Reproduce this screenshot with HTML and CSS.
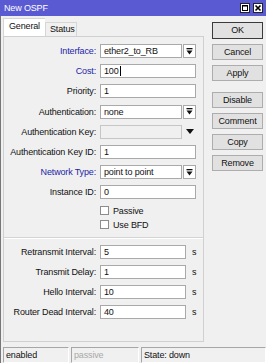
FILE: index.html
```html
<!DOCTYPE html>
<html lang="en">
<head>
    <meta charset="UTF-8">
    <title>New OSPF</title>
    <link rel="stylesheet" href="styles.css">
</head>
<body>
<div class="window">
    <div class="titlebar">
        <span class="title">New OSPF</span>
        <span class="win-btn"><svg width="8" height="8" viewBox="0 0 8 8"><rect x="1.5" y="1.5" width="5" height="5" fill="none" stroke="#000" stroke-width="1"/><rect x="1" y="1" width="6" height="1.5" fill="#000"/></svg></span>
        <span class="win-btn"><svg width="8" height="8" viewBox="0 0 8 8"><path d="M1.5 1.5 L6.5 6.5 M6.5 1.5 L1.5 6.5" stroke="#000" stroke-width="1.6"/></svg></span>
    </div>

    <div class="frame">
        <div class="main">
            <div class="left">
                <div class="tabs">
                    <div class="tab active">General</div>
                    <div class="tab">Status</div>
                </div>
                <div class="panel">
                    <div class="group">
                        <div class="row">
                            <label class="blue">Interface:</label>
                            <div class="combo"><div class="field">ether2_to_RB</div><div class="drop"><svg width="7" height="7" viewBox="0 0 7 7"><rect x="0.5" y="0" width="6" height="1.3" fill="#111"/><polygon points="0.5,2.5 6.5,2.5 3.5,6.5" fill="#111"/></svg></div></div>
                        </div>
                        <div class="row">
                            <label class="blue">Cost:</label>
                            <div class="field">100<span class="caret"></span></div>
                        </div>
                        <div class="row">
                            <label>Priority:</label>
                            <div class="field">1</div>
                        </div>
                        <div class="row">
                            <label>Authentication:</label>
                            <div class="combo"><div class="field">none</div><div class="drop"><svg width="7" height="7" viewBox="0 0 7 7"><rect x="0.5" y="0" width="6" height="1.3" fill="#111"/><polygon points="0.5,2.5 6.5,2.5 3.5,6.5" fill="#111"/></svg></div></div>
                        </div>
                        <div class="row">
                            <label>Authentication Key:</label>
                            <div class="combo"><div class="field disabled"></div><div class="drop plain"><svg width="8" height="5" viewBox="0 0 8 5"><polygon points="0,0 8,0 4,5" fill="#111"/></svg></div></div>
                        </div>
                        <div class="row">
                            <label>Authentication Key ID:</label>
                            <div class="field">1</div>
                        </div>
                        <div class="row">
                            <label class="blue">Network Type:</label>
                            <div class="combo"><div class="field">point to point</div><div class="drop"><svg width="7" height="7" viewBox="0 0 7 7"><rect x="0.5" y="0" width="6" height="1.3" fill="#111"/><polygon points="0.5,2.5 6.5,2.5 3.5,6.5" fill="#111"/></svg></div></div>
                        </div>
                        <div class="row">
                            <label>Instance ID:</label>
                            <div class="field">0</div>
                        </div>
                        <div class="check-row first"><span class="box"></span>Passive</div>
                        <div class="check-row"><span class="box"></span>Use BFD</div>
                    </div>

                    <div class="separator"></div>

                    <div class="group timers">
                        <div class="row">
                            <label>Retransmit Interval:</label>
                            <div class="unit"><div class="field">5</div><span>s</span></div>
                        </div>
                        <div class="row">
                            <label>Transmit Delay:</label>
                            <div class="unit"><div class="field">1</div><span>s</span></div>
                        </div>
                        <div class="row">
                            <label>Hello Interval:</label>
                            <div class="unit"><div class="field">10</div><span>s</span></div>
                        </div>
                        <div class="row">
                            <label>Router Dead Interval:</label>
                            <div class="unit"><div class="field">40</div><span>s</span></div>
                        </div>
                    </div>
                </div>
            </div>

            <div class="buttons">
                <div class="btn default">OK</div>
                <div class="btn">Cancel</div>
                <div class="btn">Apply</div>
                <div class="btn spaced">Disable</div>
                <div class="btn">Comment</div>
                <div class="btn">Copy</div>
                <div class="btn">Remove</div>
            </div>
        </div>

        <div class="statusbar">
            <div class="cell first">enabled</div>
            <div class="cell second muted">passive</div>
            <div class="cell last">State: down</div>
        </div>
    </div>
</div>
</body>
</html>
```

FILE: styles.css
```css
* { box-sizing: border-box; }
body { margin: 0; font-family: "Liberation Sans", Arial, sans-serif; font-size: 9px; letter-spacing: -0.15px; color: #111; background: #f0f0f0; }

.window { width: 266px; height: 363px; display: flex; flex-direction: column; background: #f0f0f0; overflow: hidden; }

/* title bar */
.titlebar { height: 16px; flex: none; background: #5a5ad2; color: #fff; display: flex; align-items: center; padding: 0 3px 0 4px; }
.titlebar .title { flex: 1; }
.win-btn { width: 10px; height: 10px; background: #fff; border: 1px solid #222; margin-left: 3px; display: flex; align-items: center; justify-content: center; }
.win-btn svg { display: block; }

.frame { flex: 1; display: flex; flex-direction: column; border-left: 1px solid #777; }
.main { flex: 1; display: flex; }

/* left side: tabs + panel */
.left { width: 203px; padding: 2px 0 4px 2px; display: flex; flex-direction: column; }
.tabs { height: 18px; display: flex; align-items: flex-end; }
.tab { height: 14px; padding: 0 6px; line-height: 13px; border: 1px solid #d6d6d6; border-bottom: none; background: #f0f0f0; }
.tab.active { height: 18px; width: 42px; line-height: 15px; padding: 0 0 0 5px; background: #fff; border-right: none; }
.tab + .tab { width: 32px; padding: 0 0 0 4px; }

.panel { flex: 1; border: 1px solid #d0d0d0; background: #f0f0f0; padding-top: 7px; }

.row { display: grid; grid-template-columns: 92px 1fr; column-gap: 4px; height: 14px; align-items: center; margin-bottom: 6.2px; padding-right: 7px; }
.row label { text-align: right; white-space: nowrap; }
.row label.blue { color: #2424a6; }

.field { height: 14px; border: 1px solid #a9a9a9; background: #fff; padding-left: 3px; line-height: 12px; white-space: nowrap; }
.field.disabled { background: #f0f0f0; border-color: #c6c6c6; }
.caret { display: inline-block; width: 1px; height: 10px; background: #000; vertical-align: -2px; margin-left: 1px; }

.combo { display: flex; }
.combo .field { flex: 1; }
.drop { width: 13px; height: 14px; margin-left: 1px; border: 1px solid #a9a9a9; background: #fff; display: flex; align-items: center; justify-content: center; }
.drop.plain { border: none; background: none; margin-left: 1px; }
.drop svg { display: block; }

.check-row { height: 10px; display: flex; align-items: center; margin-left: 96px; margin-bottom: 4px; }
.check-row.first { margin-top: 0; }
.check-row .box { width: 9px; height: 9px; border: 1px solid #8c8c8c; background: #fff; margin-right: 4px; }

.separator { height: 2px; border-top: 1px solid #d4d4d4; border-bottom: 1px solid #fff; margin: 7px 0 6px; }

.timers .row { margin-bottom: 6.3px; }
.unit { display: flex; align-items: center; }
.unit .field { width: 86px; }
.unit span { margin-left: 6px; }

/* right side buttons */
.buttons { flex: 1; padding: 6px 0 0 8px; display: flex; flex-direction: column; }
.btn { width: 51px; height: 16px; margin-bottom: 5px; border: 1px solid #adadad; background: #e1e1e1; text-align: center; line-height: 14px; }
.btn.default { height: 17px; border-color: #3a3a3a; line-height: 15px; }
.btn.spaced { margin-top: 6px; }

/* status bar */
.statusbar { height: 16px; flex: none; display: flex; padding-left: 2px; margin-top: 1px; }
.cell { height: 16px; padding-left: 2px; line-height: 15px; border-top: 1px solid #a6a6a6; border-left: 1px solid #a6a6a6; border-bottom: 1px solid #fff; border-right: 1px solid #fff; }
.cell.first { width: 66px; }
.cell.second { width: 68px; margin-left: 2px; }
.cell.last { flex: 1; margin-left: 2px; }
.muted { color: #a9a9a9; }
```
